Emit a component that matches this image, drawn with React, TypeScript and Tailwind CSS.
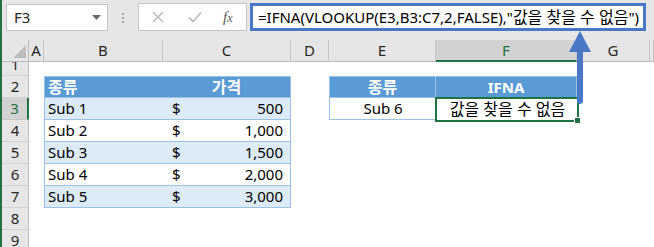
import React from "react";

const FONT = { fontFamily: '"Noto Sans", "Noto Sans CJK KR", sans-serif' };

const cols = ["A", "B", "C", "D", "E", "F", "G", ""];
const data = [
  ["Sub 1", "500"],
  ["Sub 2", "1,000"],
  ["Sub 3", "1,500"],
  ["Sub 4", "2,000"],
  ["Sub 5", "3,000"],
];

function ColHeader({ label }: { label: string }) {
  const selected = label === "F";
  return (
    <div
      className={
        selected
          ? "h-[22px] bg-[#d2d2d2] border-r border-r-[#c6c6c6] border-b-2 border-b-[#217346] flex items-center justify-center text-[15px] text-[#217346]"
          : "h-[22px] bg-[#e6e6e6] border-r border-r-[#c6c6c6] border-b border-b-[#bcbcbc] flex items-center justify-center text-[15px] text-[#262626]"
      }
    >
      {label}
    </div>
  );
}

function RowHeader({ n }: { n: number }) {
  if (n === 1) {
    return (
      <div className="h-[14px] overflow-hidden bg-[#e6e6e6] border-r border-r-[#bcbcbc] border-b border-b-[#d4d4d4]">
        <div className="h-[22px] -mt-[9px] flex items-center justify-center text-[15px] text-[#262626]">1</div>
      </div>
    );
  }
  const selected = n === 3;
  return (
    <div
      className={
        selected
          ? "h-[22px] bg-[#d2d2d2] border-r-2 border-r-[#217346] border-b border-b-[#c6c6c6] flex items-center justify-center text-[15px] text-[#217346]"
          : "h-[22px] bg-[#e6e6e6] border-r border-r-[#bcbcbc] border-b border-b-[#d4d4d4] flex items-center justify-center text-[15px] text-[#262626]"
      }
    >
      {n}
    </div>
  );
}

function Blank({ h = 22 }: { h?: number }) {
  return <div className={h === 14 ? "h-[14px] bg-white" : "h-[22px] bg-white"} />;
}

export default function App() {
  const rows: React.ReactNode[] = [];

  rows.push(
    <div key="corner" className="h-[22px] bg-[#e6e6e6] border-r border-r-[#bcbcbc] border-b border-b-[#bcbcbc] flex items-end justify-end pr-[2px] pb-[3px]">
      <svg width="13" height="13" viewBox="0 0 13 13">
        <polygon points="13,0 13,13 0,13" fill="#bdbdbd" />
      </svg>
    </div>
  );
  cols.forEach((c, i) => rows.push(<ColHeader key={"ch" + i} label={c} />));

  rows.push(<RowHeader key="rh1" n={1} />);
  for (let i = 0; i < 8; i++) rows.push(<Blank key={"r1c" + i} h={14} />);

  rows.push(<RowHeader key="rh2" n={2} />);
  rows.push(<Blank key="r2a" />);
  rows.push(
    <div key="r2b" className="h-[22px] bg-[#5b9bd5] border-l border-t border-b border-[#9bc2e6] flex items-center pl-[3px] text-[16px] font-bold text-white">
      종류
    </div>
  );
  rows.push(
    <div key="r2c" className="h-[22px] bg-[#5b9bd5] border-r border-t border-b border-[#9bc2e6] flex items-center justify-center text-[16px] font-bold text-white">
      가격
    </div>
  );
  rows.push(<Blank key="r2d" />);
  rows.push(
    <div key="r2e" className="h-[22px] bg-[#5b9bd5] border-l border-t border-b border-r border-[#9bc2e6] flex items-center justify-center text-[16px] font-bold text-white">
      종류
    </div>
  );
  rows.push(
    <div key="r2f" className="h-[22px] bg-[#5b9bd5] border-r border-t border-b border-[#9bc2e6] flex items-center justify-center text-[15px] font-bold text-white">
      IFNA
    </div>
  );
  rows.push(<Blank key="r2g" />);
  rows.push(<Blank key="r2h" />);

  data.forEach(([name, val], idx) => {
    const n = idx + 3;
    const light = idx % 2 === 0;
    rows.push(<RowHeader key={"rh" + n} n={n} />);
    rows.push(<Blank key={"r" + n + "a"} />);
    rows.push(
      <div
        key={"r" + n + "b"}
        className={
          light
            ? "h-[22px] bg-[#ddebf7] border-l border-b border-[#9bc2e6] flex items-center pl-[3px] text-[15px] text-black"
            : "h-[22px] bg-white border-l border-b border-[#9bc2e6] flex items-center pl-[3px] text-[15px] text-black"
        }
      >
        {name}
      </div>
    );
    rows.push(
      <div
        key={"r" + n + "c"}
        className={
          light
            ? "h-[22px] bg-[#ddebf7] border-r border-b border-[#9bc2e6] flex items-center justify-between pl-[9px] pr-[7px] text-[15px] text-black"
            : "h-[22px] bg-white border-r border-b border-[#9bc2e6] flex items-center justify-between pl-[9px] pr-[7px] text-[15px] text-black"
        }
      >
        <span>$</span>
        <span>{val}</span>
      </div>
    );
    rows.push(<Blank key={"r" + n + "d"} />);
    if (n === 3) {
      rows.push(
        <div key="r3e" className="h-[22px] bg-white border-l border-b border-[#9bc2e6] flex items-center justify-center text-[15px] text-black">
          Sub 6
        </div>
      );
      rows.push(
        <div key="r3f" className="h-[22px] bg-white flex items-center justify-center pl-[2px] text-[16px] text-black">
          값을 찾을 수 없음
        </div>
      );
    } else {
      rows.push(<Blank key={"r" + n + "e"} />);
      rows.push(<Blank key={"r" + n + "f"} />);
    }
    rows.push(<Blank key={"r" + n + "g"} />);
    rows.push(<Blank key={"r" + n + "h"} />);
  });

  [8, 9].forEach((n) => {
    rows.push(<RowHeader key={"rh" + n} n={n} />);
    for (let i = 0; i < 8; i++) rows.push(<Blank key={"r" + n + "x" + i} />);
  });

  return (
    <div className="relative w-[654px] h-[247px] overflow-hidden bg-white flex" style={FONT}>
      <div className="w-[2px] shrink-0 bg-[#217346]" />
      <div className="flex-1 flex flex-col">
        <div className="h-[40px] shrink-0 bg-[#e6e6e6] flex items-start pt-[3px]">
          <div className="ml-[4px] mt-[1px] w-[102px] h-[27px] bg-white border border-[#c6c6c6] flex items-center justify-between pl-[7px] pr-[6px]">
            <span className="text-[15px] text-[#262626]">F3</span>
            <svg width="9" height="5" viewBox="0 0 9 5">
              <polygon points="0,0 9,0 4.5,5" fill="#6b6b6b" />
            </svg>
          </div>
          <div className="w-[30px] h-[29px] flex flex-col items-center justify-center gap-[2px]">
            <div className="w-[2px] h-[2px] bg-[#a8a8a8]" />
            <div className="w-[2px] h-[2px] bg-[#a8a8a8]" />
            <div className="w-[2px] h-[2px] bg-[#a8a8a8]" />
          </div>
          <div className="w-[109px] h-[28px] bg-white border border-[#c6c6c6] flex items-center pl-[13px]">
            <svg width="12" height="12" viewBox="0 0 12 12">
              <path d="M1 1 L11 11 M11 1 L1 11" stroke="#bcbcbc" strokeWidth="1.6" />
            </svg>
            <svg className="ml-[24px]" width="14" height="12" viewBox="0 0 14 12">
              <path d="M1 6.5 L5 10.5 L13 1.5" stroke="#bcbcbc" strokeWidth="1.8" fill="none" />
            </svg>
            <span
              className="ml-[21px] text-[15px] italic text-[#5a5a5a]"
              style={{ fontFamily: '"Liberation Serif", serif' }}
            >
              f<span className="text-[12px]">x</span>
            </span>
          </div>
          <div className="ml-[3px] w-[396px] h-[28px] bg-white border-[3px] border-[#4a78c6] flex items-center pl-[5px] text-[15px] text-black whitespace-nowrap overflow-hidden">
            =IFNA(VLOOKUP(E3,B3:C7,2,FALSE),"<span className="text-[16px]">값을 찾을 수 없음</span>")
          </div>
        </div>
        <div className="grid grid-cols-[27px_15px_119px_128px_38px_107px_141px_73px_1fr]">{rows}</div>
      </div>

      <div className="absolute left-[435px] top-[97px] w-[144px] h-[25px] border-2 border-[#217346]" />
      <div className="absolute left-[574px] top-[117px] w-[7px] h-[7px] bg-[#217346] border border-white" />

      <svg className="absolute left-[566px] top-[30px]" width="28" height="76" viewBox="0 0 28 76">
        <rect x="11" y="18" width="6" height="56" rx="3" fill="#4a78c6" />
        <polygon points="14,1 3,22 25,22" fill="#4a78c6" />
      </svg>
    </div>
  );
}
